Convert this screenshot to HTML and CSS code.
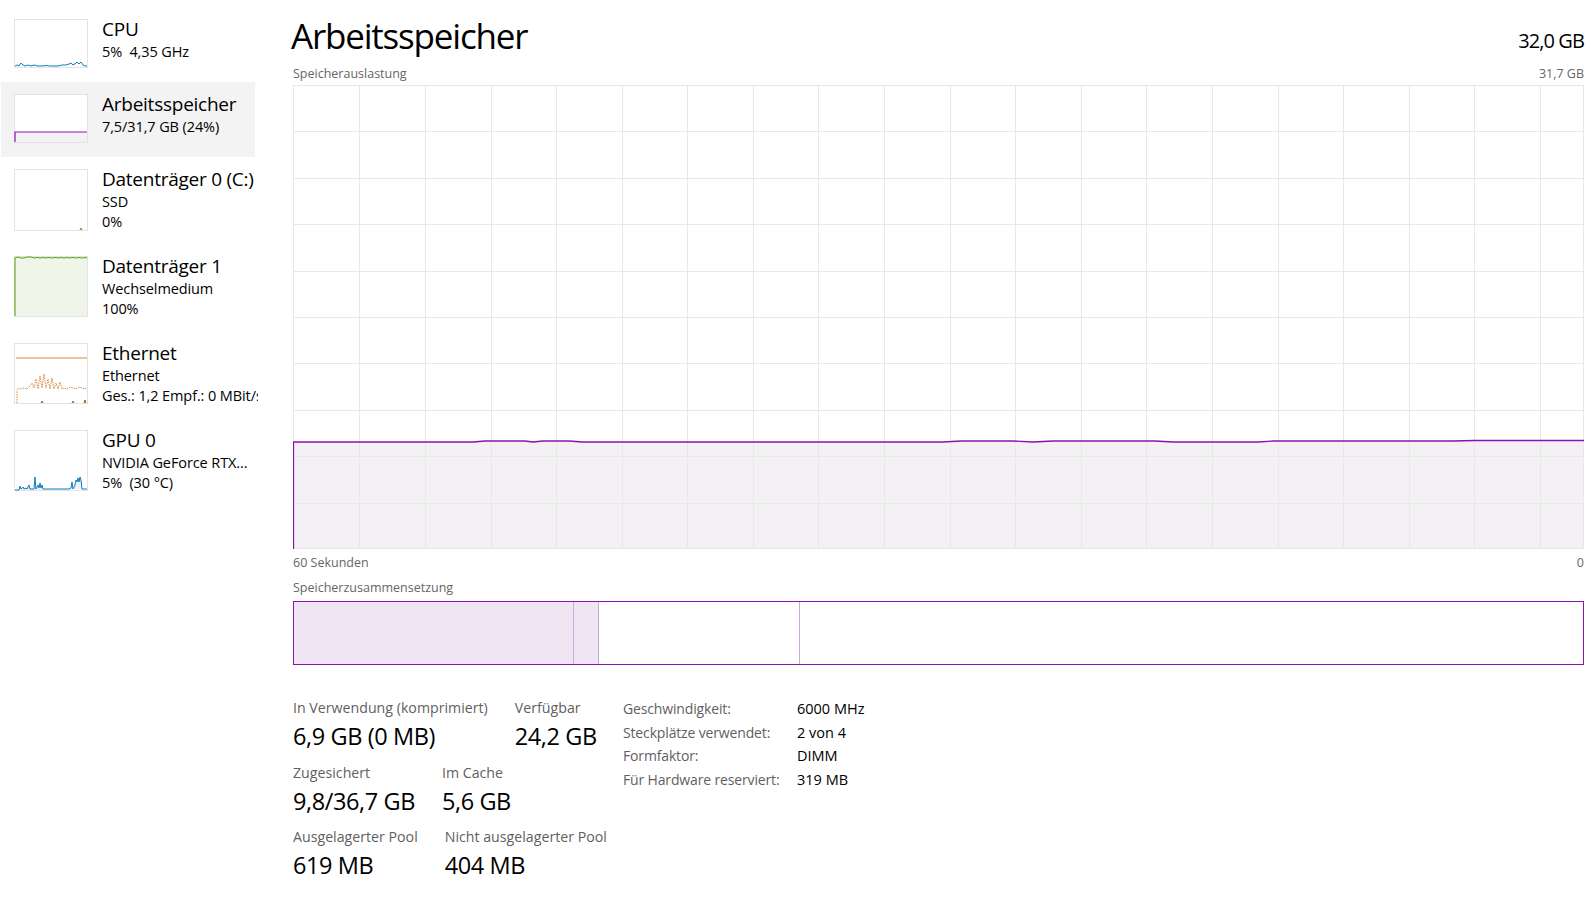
FILE: index.html
```html
<!DOCTYPE html>
<html lang="de">
<head>
    <meta charset="UTF-8">
    <title>Task-Manager - Leistung</title>
    <link rel="stylesheet" href="styles.css">
</head>
<body>
    <div class="sidebar">
        <div class="item">
            <svg class="thumb" width="74" height="49" viewBox="0 0 74 49">
                <rect x="0.5" y="0.5" width="73" height="48" fill="#fff" stroke="#e3e3e3"/>
                <path d="M1,47 L3,46 L5,47 L7,44 L9,46 L11,47 L14,46 L17,47 L20,46 L24,47 L28,47 L32,46.5 L36,47 L40,47 L44,47 L48,46 L52,46 L55,45 L57,44 L59,46 L61,45 L63,43 L65,45 L67,43 L69,46 L71,47 L73,47"
                      fill="none" stroke="#117dbb" stroke-width="1"/>
            </svg>
            <div class="info">
                <div class="name">CPU</div>
                <div class="sub">5%&nbsp; 4,35 GHz</div>
            </div>
        </div>
        <div class="item selected">
            <svg class="thumb" width="74" height="49" viewBox="0 0 74 49">
                <rect x="0.5" y="0.5" width="73" height="48" fill="#fff" stroke="#e3e3e3"/>
                <rect x="1" y="38" width="72" height="10" fill="#f4f1f6"/>
                <path d="M1,48 L1,38 L73,38" fill="none" stroke="#8b12ae" stroke-width="1.2"/>
            </svg>
            <div class="info">
                <div class="name">Arbeitsspeicher</div>
                <div class="sub">7,5/31,7 GB (24%)</div>
            </div>
        </div>
        <div class="item tall">
            <svg class="thumb" width="74" height="62" viewBox="0 0 74 62">
                <rect x="0.5" y="0.5" width="73" height="61" fill="#fff" stroke="#e3e3e3"/>
                <path d="M66,61 L67,59 L68,61" fill="none" stroke="#4da60c" stroke-width="1"/>
            </svg>
            <div class="info">
                <div class="name">Datenträger 0 (C:)</div>
                <div class="sub">SSD</div>
                <div class="sub">0%</div>
            </div>
        </div>
        <div class="item tall">
            <svg class="thumb" width="74" height="61" viewBox="0 0 74 61">
                <rect x="0.5" y="0.5" width="73" height="60" fill="#eff5e9" stroke="#e3e3e3"/>
                <path d="M1,60 L1,2 L4,1 L7,2 L10,2 L13,1 L17,1 L20,2 L23,1.5 L26,2 L29,1.5 L32,2 L35,1.5 L38,2 L41,1.5 L44,2 L47,1.5 L50,2 L53,1.5 L56,2 L59,1.5 L62,2 L65,1.5 L68,2 L71,1.5 L73,2"
                      fill="none" stroke="#4da60c" stroke-width="1"/>
            </svg>
            <div class="info">
                <div class="name">Datenträger 1</div>
                <div class="sub">Wechselmedium</div>
                <div class="sub">100%</div>
            </div>
        </div>
        <div class="item tall">
            <svg class="thumb" width="74" height="61" viewBox="0 0 74 61">
                <rect x="0.5" y="0.5" width="73" height="60" fill="#fff" stroke="#e3e3e3"/>
                <line x1="2" y1="15" x2="73" y2="15" stroke="#d98c45" stroke-width="1"/>
                <path d="M3,60 L3,47 L5,45 L7,46 L10,45 L13,46 L16,43 L18,40 L20,45 L22,36 L24,46 L26,33 L28,45 L30,31 L32,45 L34,36 L36,46 L38,35 L40,46 L42,40 L44,46 L46,39 L48,46 L50,45 L53,46 L56,44 L59,45 L62,46 L65,44 L68,45 L71,46 L73,45"
                      fill="none" stroke="#d98c45" stroke-width="1" stroke-dasharray="1.5 1"/>
                <path d="M27,60 L28,58 L29,60 M58,60 L59,58 L60,60 M70,60 L71,57 L72,60" fill="none" stroke="#a85a14" stroke-width="1"/>
            </svg>
            <div class="info">
                <div class="name">Ethernet</div>
                <div class="sub">Ethernet</div>
                <div class="sub">Ges.: 1,2 Empf.: 0 MBit/s</div>
            </div>
        </div>
        <div class="item tall">
            <svg class="thumb" width="74" height="61" viewBox="0 0 74 61">
                <rect x="0.5" y="0.5" width="73" height="60" fill="#fff" stroke="#e3e3e3"/>
                <path d="M1,60 L5,60 L6,56 L7,59 L9,57 L10,59 L12,58 L13,59 L15,55 L16,59 L18,59 L20,59 L21,47 L22,59 L24,55 L25,58 L26,53 L27,58 L28,55 L29,59 L31,59 L55,59 L57,58 L58,52 L59,59 L61,55 L62,50 L63,52 L64,48 L65,52 L66,47 L67,50 L68,59 L70,59 L73,59 Z"
                      fill="#e8f2fa" stroke="none"/>
                <path d="M1,60 L5,60 L6,56 L7,59 L9,57 L10,59 L12,58 L13,59 L15,55 L16,59 L18,59 L20,59 L21,47 L22,59 L24,55 L25,58 L26,53 L27,58 L28,55 L29,59 L31,59 L55,59 L57,58 L58,52 L59,59 L61,55 L62,50 L63,52 L64,48 L65,52 L66,47 L67,50 L68,59 L70,59 L73,59"
                      fill="none" stroke="#117dbb" stroke-width="1"/>
            </svg>
            <div class="info">
                <div class="name">GPU 0</div>
                <div class="sub">NVIDIA GeForce RTX...</div>
                <div class="sub">5%&nbsp; (30 °C)</div>
            </div>
        </div>
    </div>

    <div class="main">
        <div class="head">
            <div class="title">Arbeitsspeicher</div>
            <div class="total">32,0 GB</div>
        </div>
        <div class="caption">
            <span>Speicherauslastung</span>
            <span>31,7 GB</span>
        </div>
        <svg class="graph" width="1291" height="464" viewBox="0 0 1291 464">
            <rect x="0" y="0" width="1291" height="464" fill="#fff"/>
            <path d="M0,357 L180,357 L192,356 L232,356 L240,357 L250,356 L276,356 L290,357 L650,357 L668,356 L720,356 L740,357 L760,356 L862,356 L880,357 L965,357 L980,356 L1160,356 L1182,355.5 L1291,355.5 L1291,464 L0,464 Z"
                  fill="#f3f1f4"/>
            <g id="grid" stroke="#e8e8e8" stroke-width="1"></g>
            <path d="M0.5,464 L0.5,357 L180,357 L192,356 L232,356 L240,357 L250,356 L276,356 L290,357 L650,357 L668,356 L720,356 L740,357 L760,356 L862,356 L880,357 L965,357 L980,356 L1160,356 L1182,355.5 L1291,355.5"
                  fill="none" stroke="#8b12ae" stroke-width="1.3"/>
        </svg>
        <div class="caption tight">
            <span>60 Sekunden</span>
            <span>0</span>
        </div>
        <div class="caption comp-cap">
            <span>Speicherzusammensetzung</span>
        </div>
        <div class="composition">
            <div class="seg used"></div>
            <div class="seg modified"></div>
            <div class="seg standby"></div>
            <div class="seg free"></div>
        </div>

        <div class="stats">
            <div class="blocks">
                <div class="row">
                    <div class="stat">
                        <div class="label">In Verwendung (komprimiert)</div>
                        <div class="value">6,9 GB (0 MB)</div>
                    </div>
                    <div class="stat">
                        <div class="label">Verfügbar</div>
                        <div class="value">24,2 GB</div>
                    </div>
                </div>
                <div class="row">
                    <div class="stat">
                        <div class="label">Zugesichert</div>
                        <div class="value">9,8/36,7 GB</div>
                    </div>
                    <div class="stat">
                        <div class="label">Im Cache</div>
                        <div class="value">5,6 GB</div>
                    </div>
                </div>
                <div class="row">
                    <div class="stat">
                        <div class="label">Ausgelagerter Pool</div>
                        <div class="value">619 MB</div>
                    </div>
                    <div class="stat">
                        <div class="label">Nicht ausgelagerter Pool</div>
                        <div class="value">404 MB</div>
                    </div>
                </div>
            </div>
            <div class="props">
                <div class="key">Geschwindigkeit:</div><div class="val">6000 MHz</div>
                <div class="key">Steckplätze verwendet:</div><div class="val">2 von 4</div>
                <div class="key">Formfaktor:</div><div class="val">DIMM</div>
                <div class="key">Für Hardware reserviert:</div><div class="val">319 MB</div>
            </div>
        </div>
    </div>

    <script>
        // Draw the grid of the usage graph
        var grid = document.getElementById('grid');
        var ns = 'http://www.w3.org/2000/svg';

        function addLine(x1, y1, x2, y2) {
            var line = document.createElementNS(ns, 'line');
            line.setAttribute('x1', x1);
            line.setAttribute('y1', y1);
            line.setAttribute('x2', x2);
            line.setAttribute('y2', y2);
            grid.appendChild(line);
        }

        for (var i = 0; i <= 10; i++) {
            var y = Math.round(i * 46.4) + 0.5;
            if (i == 10) y = 463.5;
            addLine(0, y, 1291, y);
        }
        for (var k = 0; k <= 18; k++) {
            var x = Math.round(66.3 + k * 65.6) + 0.5;
            addLine(x, 0, x, 464);
        }
        addLine(0.5, 0, 0.5, 464);
        addLine(1290.5, 0, 1290.5, 464);
    </script>
</body>
</html>
```

FILE: styles.css
```css
body {
    margin: 0;
    padding: 0;
    display: flex;
    font-family: "Open Sans", "Noto Sans", sans-serif;
    color: #000;
    background: #fff;
    width: 1585px;
    height: 900px;
    overflow: hidden;
}

.sidebar {
    width: 258px;
    flex: none;
    padding-top: 7px;
    overflow: hidden;
}

.item {
    width: 254px;
    margin-left: 1px;
    height: 75px;
    box-sizing: border-box;
    padding: 12px 0 0 13px;
    display: flex;
    align-items: flex-start;
    gap: 14px;
}

.item.tall {
    height: 87px;
}

.item.selected {
    background: #f3f3f3;
}

.thumb {
    display: block;
    flex: none;
}

.info {
    white-space: nowrap;
    padding-top: 1px;
}

.name {
    font-size: 19px;
    line-height: 18px;
    letter-spacing: -0.25px;
    margin-bottom: 4px;
}

.sub {
    font-size: 14.5px;
    line-height: 20px;
    letter-spacing: -0.1px;
}

.main {
    flex: 1;
    padding-left: 35px;
    padding-right: 1px;
    min-width: 0;
}

.head {
    height: 58px;
    display: flex;
    justify-content: space-between;
    align-items: flex-start;
}

.title {
    font-size: 35px;
    line-height: 44px;
    margin-top: 14px;
    margin-left: -2px;
    letter-spacing: -1.2px;
}

.total {
    font-size: 20px;
    line-height: 24px;
    margin-top: 29px;
    letter-spacing: -0.9px;
}

.caption {
    display: flex;
    justify-content: space-between;
    font-size: 12.5px;
    line-height: 16px;
    color: #666;
    margin: 8px 0 3px;
}

.caption.tight {
    margin: 6px 0 0;
}

.caption.comp-cap {
    margin: 9px 0 5px;
}

.graph {
    display: block;
}

.composition {
    display: flex;
    height: 64px;
    box-sizing: border-box;
    border: 1.5px solid #8b12ae;
}

.seg {
    height: 100%;
    box-sizing: border-box;
}

.seg.used {
    width: 280px;
    background: #efe5f3;
    border-right: 1px solid #cda9db;
}

.seg.modified {
    width: 25px;
    background: #efe5f3;
    border-right: 1px solid #cda9db;
}

.seg.standby {
    width: 201px;
    border-right: 1px solid #cda9db;
}

.seg.free {
    flex: 1;
}

.stats {
    display: flex;
    margin-top: 33px;
}

.blocks {
    width: 330px;
    flex: none;
}

.row {
    display: flex;
    gap: 27px;
    margin-bottom: 11.5px;
}

.label {
    font-size: 14.2px;
    line-height: 20px;
    color: #5f5f5f;
    margin-bottom: 3px;
    white-space: nowrap;
}

.value {
    font-size: 23.5px;
    line-height: 30px;
    letter-spacing: -0.4px;
    white-space: nowrap;
}

.props {
    display: grid;
    grid-template-columns: 157px auto;
    column-gap: 17px;
    align-content: start;
    margin-top: -1px;
    font-size: 14.5px;
    line-height: 23.7px;
}

.key {
    color: #5f5f5f;
    font-size: 14px;
    letter-spacing: -0.15px;
    white-space: nowrap;
}

.val {
    color: #000;
}
```
